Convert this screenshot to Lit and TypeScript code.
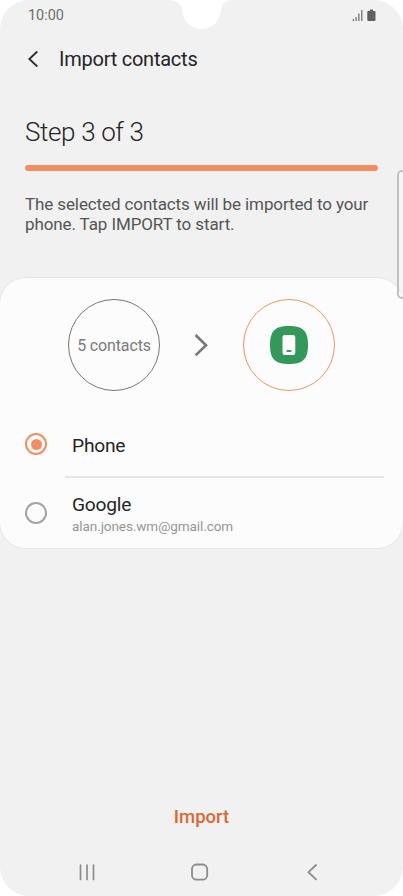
import { LitElement, html, css } from "lit";
import { customElement, state } from "lit/decorators.js";

interface Account { name: string; detail?: string; }

@customElement("app-root")
export class AppRoot extends LitElement {
  @state() private selected = 0;
  private accounts: Account[] = [
    { name: "Phone" },
    { name: "Google", detail: "alan.jones.wm@gmail.com" },
  ];

  static styles = css`
    :host { display: block; width: 403px; height: 896px; background: #fff; font-family: Roboto, sans-serif; color: #252525; }
    * { box-sizing: border-box; }
    svg { display: block; flex: none; }
    .screen { position: relative; display: flex; flex-direction: column; width: 100%; height: 100%; background: #f1f1f1; border-radius: 29px; overflow: hidden; }
    .notch { position: absolute; left: 171px; top: 0; }
    .edge { position: absolute; left: 397px; top: 170px; width: 16px; height: 129px; border: 2px solid #c0c0c0; border-radius: 5px; background: rgba(255,255,255,.35); }
    .status { display: flex; justify-content: space-between; height: 32px; padding: 0 27px 0 28px; }
    .time { font-size: 14.4px; line-height: 32px; color: #6c6c6c; }
    .signals { display: flex; gap: 4px; padding-top: 9px; }
    .header { display: flex; align-items: center; height: 54px; padding-left: 27px; gap: 20px; }
    h1 { margin: 0; font-size: 20px; font-weight: 400; line-height: 24px; letter-spacing: -.24px; }
    .intro { height: 191px; padding: 30px 25px 0; }
    h2 { margin: 0; font-size: 26px; font-weight: 300; line-height: 32px; letter-spacing: -.37px; }
    .progress { height: 6px; margin-top: 17px; border-radius: 3px; background: #f28e5f; }
    .intro p { margin: 23px 0 0; font-size: 17px; line-height: 20px; color: #555; white-space: nowrap; letter-spacing: -.11px; }
    .card { height: 272px; margin: 0 -1px; border: 1px solid #e6e6e6; border-radius: 27px; background: #fcfcfc; }
    .transfer { display: flex; align-items: center; padding: 21px 0 0 68px; }
    .ring { display: flex; align-items: center; justify-content: center; width: 92px; height: 92px; border: 1px solid #777; border-radius: 50%; font-size: 16px; letter-spacing: -.14px; color: #7b7b7b; white-space: nowrap; }
    .ring.target { border-color: #f4925f; }
    .arrow { margin: 0 35px 0 34px; }
    .options { padding-top: 22px; }
    .option { display: flex; align-items: center; height: 63px; padding-left: 25px; gap: 25px; }
    .radio { flex: none; width: 22px; height: 22px; margin-bottom: 1px; border: 2px solid #a3a3a3; border-radius: 50%; }
    .radio.on { border-color: #f28e5f; padding: 3.5px; }
    .radio.on::after { content: ""; display: block; width: 11px; height: 11px; border-radius: 50%; background: #f28e5f; }
    .name { font-size: 19.2px; line-height: 24px; letter-spacing: -.22px; }
    .option:first-child .name { padding-top: 2px; }
    .detail { font-size: 13.5px; line-height: 18px; letter-spacing: -.07px; color: #969696; }
    .divider { height: 2px; margin: 0 19px 0 65px; background: #e5e5e5; }
    .options .option:last-child { height: 71px; }
    .options .option:last-child .radio { margin-bottom: 2px; }
    .options .option:last-child .name { padding-top: 1px; }
    .spacer { flex: 1; }
    .action { align-self: center; margin: 0 0 19px; padding: 0; border: 0; background: none; font: 500 18.5px/28px Roboto, sans-serif; color: #dc6831; }
    .nav { display: flex; height: 46px; padding: 13px 0 0 77px; }
    .nav svg + svg { margin-left: 93px; }
  `;

  render() {
    return html`
      <main class="screen">
        <svg class="notch" width="62" height="30"><path d="M-4 0C7 .5 10.5 4 11 11C12 21 20 29 30.5 29C41 29 49 21 50 11C50.5 4 54 .5 62 0Z" fill="#fff"/></svg>
        <div class="status">
          <span class="time">10:00</span>
          <div class="signals">
            <svg width="11" height="13"><path d="M1.4 10V12M4.1 8V12M6.9 4.5V12M9.8 1V12" stroke="#6b6b6b" stroke-width="1.2" fill="none"/></svg>
            <svg width="9" height="13"><path d="M3 .5H6V2H7.7Q8.5 2 8.5 3V11Q8.5 12 7.5 12H1.3Q.3 12 .3 11V3Q.3 2 1.2 2H3Z" fill="#606060"/></svg>
          </div>
        </div>
        <header class="header">
          <svg width="12" height="18"><path d="M10.3 1.5L2.3 9L10.3 16.5" fill="none" stroke="#2b2b2b" stroke-width="1.8"/></svg>
          <h1>Import contacts</h1>
        </header>
        <section class="intro">
          <h2>Step 3 of 3</h2>
          <div class="progress"></div>
          <p>The selected contacts will be imported to your<br>phone. Tap IMPORT to start.</p>
        </section>
        <div class="edge"></div>
        <section class="card">
          <div class="transfer">
            <div class="ring">5 contacts</div>
            <svg class="arrow" width="14" height="24"><path d="M1.6 2L12 12.2L1.6 22.4" fill="none" stroke="#777" stroke-width="2.6"/></svg>
            <div class="ring target">
              <svg width="38" height="38"><path d="M19 0C33 0 38 5 38 19S33 38 19 38S0 33 0 19S5 0 19 0Z" fill="#33995b"/><rect x="12.5" y="9" width="12.8" height="20" rx="2.2" fill="#fcfcfc"/><rect x="16.5" y="24" width="5" height="2" rx=".8" fill="#33995b"/></svg>
            </div>
          </div>
          <div class="options">
            ${this.accounts.map((a, i) => html`
              ${i ? html`<div class="divider"></div>` : ""}
              <div class="option" @click=${() => (this.selected = i)}>
                <span class="radio ${i === this.selected ? "on" : ""}"></span>
                <div><div class="name">${a.name}</div>${a.detail ? html`<div class="detail">${a.detail}</div>` : ""}</div>
              </div>`)}
          </div>
        </section>
        <div class="spacer"></div>
        <button class="action">Import</button>
        <nav class="nav">
          <svg width="20" height="18"><path d="M3.5 2V16.5M10 2V16.5M16.5 2V16.5" stroke="#8c8c8c" stroke-width="1.7" stroke-linecap="round"/></svg>
          <svg width="20" height="20"><rect x="2" y="1.5" width="15.2" height="15.2" rx="4.5" fill="none" stroke="#8c8c8c" stroke-width="1.8"/></svg>
          <svg width="20" height="18"><path d="M13 2L5.5 9.2L13 16.4" fill="none" stroke="#8c8c8c" stroke-width="1.8" stroke-linecap="round"/></svg>
        </nav>
      </main>`;
  }
}
